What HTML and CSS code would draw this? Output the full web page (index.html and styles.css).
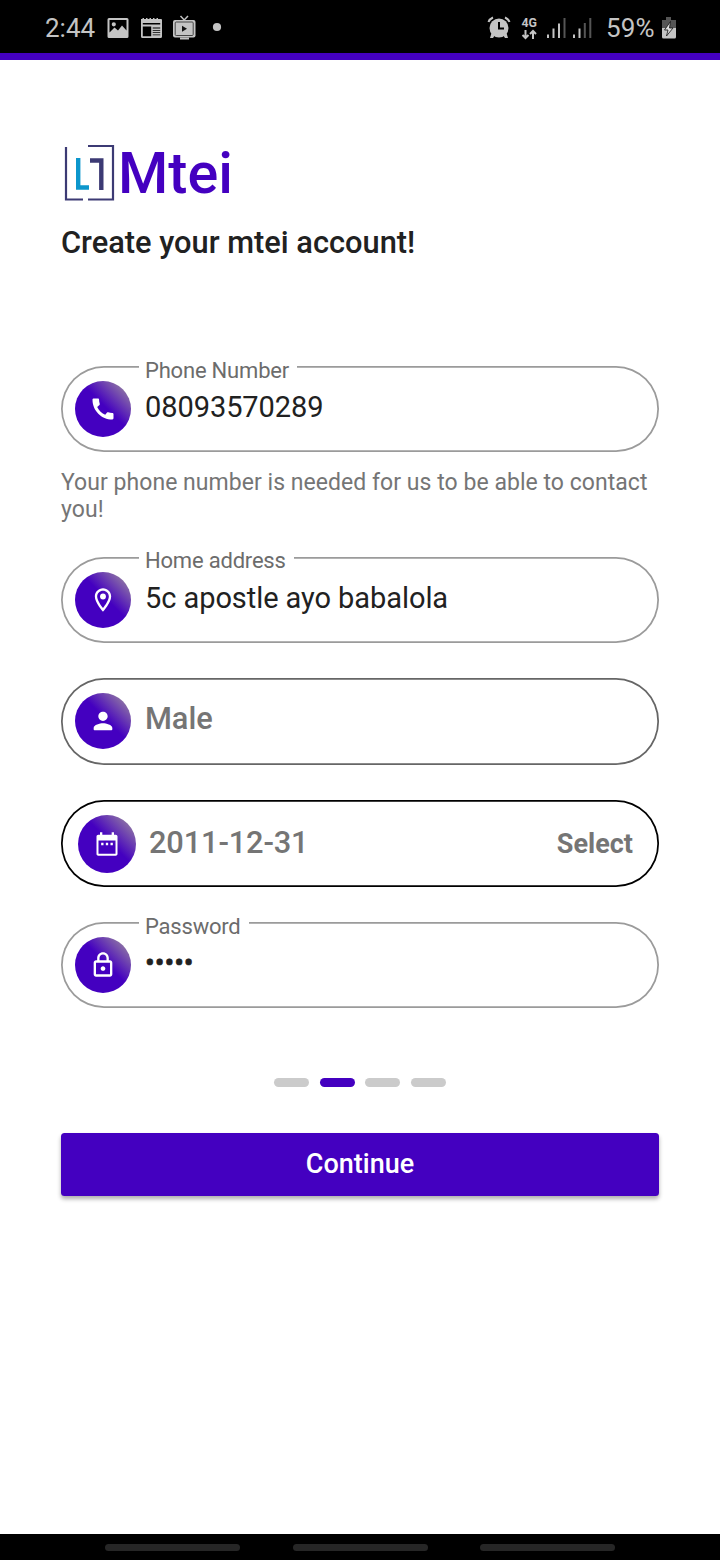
FILE: index.html
```html
<!DOCTYPE html>
<html lang="en">
<head>
<meta charset="utf-8">
<title>Mtei</title>
<link rel="stylesheet" href="styles.css">
</head>
<body>
<div class="screen">
  <header class="status">
    <span class="clock">2:44</span>
    <svg class="notif" width="160" height="30" viewBox="0 0 160 30" fill="#c4c4c4">
      <path fill-rule="evenodd" d="M4 5h18q1.500 0 1.500 1.500v17q0 1.500-1.500 1.500H4q-1.500 0-1.500-1.500v-17Q2.500 5 4 5zm.5 2v12.500l5-5 3.500 3 4-5 4.500 5V7zM8.800 9.200a2.100 2.100 0 1 1 0 4.200 2.100 2.100 0 0 1 0-4.200z"/>
      <path fill-rule="evenodd" d="M36 6h1.500V5h1.500v1h2V5h1.500v1h2V5H46v1h2V5h1.500v1h2V5H53v1h3q1 0 1 1v16.500q0 1.500-1.500 1.500h-18Q36 25 36 23.500zm1.800 4v1.500h17.400V10zm0 3.500v9.700h8.400v-9.700zm9.900 1v1h7.500v-1zm0 2.500v.8h7.500V17zm0 2.300v.8h7.500v-.8zm0 2.200v.8h7.500v-.8z"/>
      <path d="M75.500 3 79.200 7 83 3" fill="none" stroke="#c4c4c4" stroke-width="1.500"/>
      <rect x="68" y="7" width="22.500" height="17.500" rx="2"/>
      <rect x="70.200" y="9" width="18" height="13.500" rx="1" fill="none" stroke="#444" stroke-width="1"/>
      <path d="M77 12.800v6l5-3z" fill="#111"/><path d="M75 24.500h9v2h-9z"/>
      <circle cx="112" cy="14" r="4.100"/>
    </svg>
    <svg class="signals" width="110" height="30" viewBox="0 0 110 30">
      <g fill="#c4c4c4"><circle cx="14" cy="15" r="9.500"/><path d="M6.500 20 5 25h3l2-3zM21.500 20l1.500 5h-3l-2-3z"/></g>
      <path d="M3.500 9q1-3 4.500-4.500M24.500 9q-1-3-4.500-4.500" fill="none" stroke="#c4c4c4" stroke-width="2"/>
      <path d="M14 9v6.500h5" fill="none" stroke="#000" stroke-width="2"/>
      <text class="net" x="36.500" y="14" textLength="15.500" lengthAdjust="spacingAndGlyphs">4G</text>
      <path d="M40.500 17v8M37.500 22l3 3 3-3M48 26v-8M45 21l3-3 3 3" fill="none" stroke="#c4c4c4" stroke-width="2"/>
      <path d="M63 21.500v3.500M68.500 15.500V25M74 10.500V25M89 21.500v3.500M94.500 15.500V25" stroke="#c4c4c4" stroke-width="2"/>
      <path d="M79.500 5v20M99.800 10v15M105.300 5v20" stroke="#555" stroke-width="2"/>
    </svg>
    <span class="charge">59%</span>
    <svg class="battery" width="16" height="24" viewBox="0 0 16 24">
      <path d="M5 1h5v3H15v8H1V4h4z" fill="#555"/><path d="M1 12h14v9q0 1.500-1.500 1.500h-11Q1 22.500 1 21z" fill="#c4c4c4"/>
      <path d="m9.500 5.500-6 8.500H7l-1.500 6 6.500-8H8.500z" fill="#ddd" stroke="#111" stroke-width=".8"/>
    </svg>
  </header>
  <main class="page">
    <div class="brand">
      <svg width="57" height="60" viewBox="0 0 57 60" fill="none">
        <path d="M5 4v52.500H22M27 3H52v53.500H27" stroke="#3c3a74" stroke-width="2.200"/>
        <path d="M17.200 15v29.500H28" stroke="#0c96cc" stroke-width="4.400"/>
        <path d="M29 17.500H40.300V47" stroke="#3c3a74" stroke-width="4.400"/>
      </svg>
      <span class="name">Mtei</span>
    </div>
    <h1 class="title">Create your mtei account!</h1>
    <div class="field">
      <span class="label">Phone Number</span>
      <span class="badge"><svg width="28" height="28" viewBox="0 0 24 24"><path d="M20.010 15.380c-1.230 0-2.420-.2-3.530-.56-.35-.12-.74-.03-1.010.24l-1.570 1.970c-2.830-1.350-5.480-3.900-6.890-6.830l1.950-1.660c.27-.28.35-.67.24-1.020-.37-1.110-.56-2.300-.56-3.530 0-.54-.45-.99-.99-.99H4.190C3.650 3 3 3.240 3 3.990 3 13.280 10.730 21 20.010 21c.71 0 .99-.63.99-1.180v-3.450c0-.54-.45-.99-.99-.99z"/></svg></span>
      <span class="value phone">08093570289</span>
    </div>
    <p class="hint">Your phone number is needed for us to be able to contact you!</p>
    <div class="field address">
      <span class="label">Home address</span>
      <span class="badge"><svg width="28" height="28" viewBox="0 0 24 24"><path d="M12 2C8.130 2 5 5.130 5 9c0 5.250 7 13 7 13s7-7.750 7-13c0-3.870-3.130-7-7-7zM7 9c0-2.760 2.240-5 5-5s5 2.240 5 5c0 2.880-2.880 7.190-5 9.880C9.920 16.210 7 11.850 7 9z"/><circle cx="12" cy="9" r="2.500"/></svg></span>
      <span class="value">5c apostle ayo babalola</span>
    </div>
    <div class="field select">
      <span class="badge"><svg width="28" height="28" viewBox="0 0 24 24"><path d="M12 12c2.210 0 4-1.790 4-4s-1.790-4-4-4-4 1.790-4 4 1.790 4 4 4zm0 2c-2.670 0-8 1.340-8 4v1c0 .55.45 1 1 1h14c.55 0 1-.45 1-1v-1c0-2.660-5.330-4-8-4z"/></svg></span>
      <span class="value strong">Male</span>
    </div>
    <div class="field date">
      <span class="badge"><svg width="28" height="28" viewBox="0 0 24 24"><path d="M7 11h2v2H7zm4 0h2v2h-2zm4 0h2v2h-2z"/><path d="M19.500 4H18V2h-2v2H8V2H6v2H4.500C3.700 4 3 4.700 3 5.500v15c0 .8.700 1.500 1.500 1.500h15c.8 0 1.500-.7 1.500-1.500v-15c0-.8-.7-1.500-1.500-1.500zM19.300 20.300H4.700V9h14.600z"/></svg></span>
      <span class="value strong">2011-12-31</span>
      <span class="action">Select</span>
    </div>
    <div class="field password">
      <span class="label">Password</span>
      <span class="badge"><svg width="28" height="28" viewBox="0 0 24 24"><path d="M18 8h-1V6c0-2.760-2.240-5-5-5S7 3.240 7 6v2H6c-1.100 0-2 .9-2 2v10c0 1.100.9 2 2 2h12c1.100 0 2-.9 2-2V10c0-1.100-.9-2-2-2zM9 6c0-1.660 1.340-3 3-3s3 1.340 3 3v2H9V6zm9 14H6V10h12v10zm-6-3c1.100 0 2-.9 2-2s-.9-2-2-2-2 .9-2 2 .9 2 2 2z"/></svg></span>
      <span class="value dots">•••••</span>
    </div>
    <div class="steps"><i></i><i class="on"></i><i></i><i></i></div>
    <button class="continue">Continue</button>
  </main>
  <footer class="nav"><i></i><i></i><i></i></footer>
</div>
</body>
</html>
```
FILE: styles.css
```css
* { box-sizing: border-box; }
body { margin: 0; font-family: Roboto, sans-serif; background: #fff; color: #212121; }
.screen { width: 720px; height: 1560px; display: flex; flex-direction: column; overflow: hidden; }
.status { height: 60px; flex: none; background: #000; border-bottom: 7px solid #4400c0; display: flex; align-items: center; padding: 2px 43px 0 45px; color: #c4c4c4; }
.clock, .charge { font-size: 26px; line-height: 30px; white-space: nowrap; }
.clock { width: 60px; }
.charge { width: 55px; margin-left: 11px; letter-spacing: 0.2px; }
.signals { margin-left: auto; }
.net { font: 700 13.500px Roboto, sans-serif; fill: #c4c4c4; }
.status svg { flex: none; }
.page { flex: 1; padding: 83px 61px 0; display: flex; flex-direction: column; }
.brand { display: flex; height: 60px; align-items: center; }
.name { font-size: 57.500px; font-weight: 500; line-height: 60px; color: #4400c0; padding-top: 2px; }
.title { margin: 22px 0 0; font-size: 30.800px; line-height: 36px; font-weight: 500; height: 36px; white-space: nowrap; }
.field { position: relative; height: 86px; border-radius: 43px; box-shadow: inset 0 0 0 1.750px #9b9b9b; display: flex; padding: 15px 25px 0 14px; flex: none; }
.title + .field { margin-top: 105px; }
.label { position: absolute; left: 78px; top: -8px; padding: 0 8px 0 6px; background: #fff; font-size: 22px; line-height: 26px; color: #6c6c6c; white-space: nowrap; letter-spacing: -0.200px; }
.address .label { top: -9px; }
.badge { width: 56px; height: 56px; border-radius: 50%; background: linear-gradient(45deg, #4400c0 54%, #9e8e9e 96%); display: grid; place-items: center; flex: none; }
.badge svg { fill: #fff; }
.value { margin: 9px 0 0 14px; font-size: 29px; line-height: 34px; height: 34px; white-space: nowrap; letter-spacing: -0.070px; }
.dots { -webkit-text-stroke: 0.6px #212121; }
.hint { margin: 17px 0 0; font-size: 23px; line-height: 27px; height: 53px; color: #757575; letter-spacing: 0.040px; }
.hint + .field { margin-top: 35px; }
.select { margin-top: 35px; height: 87px; box-shadow: inset 0 0 0 1.750px #666; }
.strong { font-size: 30.800px; font-weight: 500; color: #757575; }
.date { margin-top: 35px; height: 87px; box-shadow: inset 0 0 0 1.750px #000; padding: 15px 26px 0 17px; }
.date .badge { width: 58px; height: 58px; }
.date .value { margin-top: 11px; margin-left: 13px; letter-spacing: -0.150px; }
.action { margin: 12px 0 0 auto; font-size: 27px; line-height: 34px; font-weight: 700; color: #757575; }
.password { margin-top: 35px; }
.steps { display: flex; justify-content: center; gap: 10.500px; margin-top: 70px; height: 9px; }
.steps i { width: 35px; height: 9px; border-radius: 5px; background: #cbcbcb; }
.steps .on { background: #4400c0; }
.continue { margin: 46px 0 0; height: 63px; border: 0; border-radius: 3.500px; background: #4400c0; color: #fff; font: 500 27px/61px Roboto, sans-serif; padding: 0; box-shadow: 0 3px 4px rgba(0,0,0,.32); flex: none; }
.nav { height: 26px; background: #000; display: flex; justify-content: center; gap: 52.500px; padding-top: 10px; flex: none; }
.nav i { width: 135px; height: 7px; border-radius: 4px; background: #262626; }
```
